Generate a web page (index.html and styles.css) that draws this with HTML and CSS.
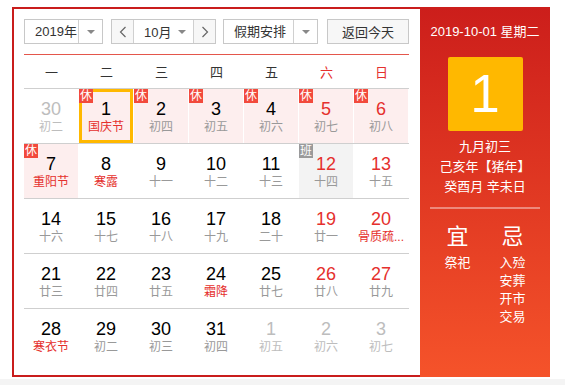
FILE: index.html
```html
<!DOCTYPE html>
<html lang="zh">
<head>
<meta charset="utf-8">
<title>万年历</title>
<link rel="stylesheet" href="styles.css">
</head>
<body>
<div class="page">
  <div class="cal">
    <div class="main">
      <div class="toolbar">
        <div class="select year">
          <span class="val">2019年</span>
          <span class="arrow"><i class="tri"></i></span>
        </div>
        <div class="month-group">
          <span class="nav nav-prev"><svg width="8" height="12" viewBox="0 0 8 12"><polyline points="6.5,1 1.5,6 6.5,11" fill="none" stroke="#666" stroke-width="1.2"/></svg></span>
          <span class="month"><span class="val">10月</span><i class="tri"></i></span>
          <span class="nav nav-next"><svg width="8" height="12" viewBox="0 0 8 12"><polyline points="1.5,1 6.5,6 1.5,11" fill="none" stroke="#666" stroke-width="1.2"/></svg></span>
        </div>
        <div class="select holiday">
          <span class="val">假期安排</span>
          <span class="arrow"><i class="tri"></i></span>
        </div>
        <div class="btn-today">返回今天</div>
      </div>
      <div class="redline"></div>
      <div class="weekdays">
        <span>一</span><span>二</span><span>三</span><span>四</span><span>五</span><span class="we">六</span><span class="we">日</span>
      </div>
      <div class="grid">
        <div class="cell"><div class="in other"><div class="num">30</div><div class="lunar">初二</div></div></div>
        <div class="cell"><div class="in rest sel"><span class="badge">休</span><div class="num">1</div><div class="lunar fest">国庆节</div></div></div>
        <div class="cell"><div class="in rest"><span class="badge">休</span><div class="num">2</div><div class="lunar">初四</div></div></div>
        <div class="cell"><div class="in rest"><span class="badge">休</span><div class="num">3</div><div class="lunar">初五</div></div></div>
        <div class="cell"><div class="in rest"><span class="badge">休</span><div class="num">4</div><div class="lunar">初六</div></div></div>
        <div class="cell"><div class="in rest"><span class="badge">休</span><div class="num red">5</div><div class="lunar">初七</div></div></div>
        <div class="cell"><div class="in rest"><span class="badge">休</span><div class="num red">6</div><div class="lunar">初八</div></div></div>

        <div class="cell"><div class="in rest"><span class="badge">休</span><div class="num">7</div><div class="lunar fest">重阳节</div></div></div>
        <div class="cell"><div class="in"><div class="num">8</div><div class="lunar fest">寒露</div></div></div>
        <div class="cell"><div class="in"><div class="num">9</div><div class="lunar">十一</div></div></div>
        <div class="cell"><div class="in"><div class="num">10</div><div class="lunar">十二</div></div></div>
        <div class="cell"><div class="in"><div class="num">11</div><div class="lunar">十三</div></div></div>
        <div class="cell"><div class="in work"><span class="badge gray">班</span><div class="num red">12</div><div class="lunar">十四</div></div></div>
        <div class="cell"><div class="in"><div class="num red">13</div><div class="lunar">十五</div></div></div>

        <div class="cell"><div class="in"><div class="num">14</div><div class="lunar">十六</div></div></div>
        <div class="cell"><div class="in"><div class="num">15</div><div class="lunar">十七</div></div></div>
        <div class="cell"><div class="in"><div class="num">16</div><div class="lunar">十八</div></div></div>
        <div class="cell"><div class="in"><div class="num">17</div><div class="lunar">十九</div></div></div>
        <div class="cell"><div class="in"><div class="num">18</div><div class="lunar">二十</div></div></div>
        <div class="cell"><div class="in"><div class="num red">19</div><div class="lunar">廿一</div></div></div>
        <div class="cell"><div class="in"><div class="num red">20</div><div class="lunar fest">骨质疏...</div></div></div>

        <div class="cell"><div class="in"><div class="num">21</div><div class="lunar">廿三</div></div></div>
        <div class="cell"><div class="in"><div class="num">22</div><div class="lunar">廿四</div></div></div>
        <div class="cell"><div class="in"><div class="num">23</div><div class="lunar">廿五</div></div></div>
        <div class="cell"><div class="in"><div class="num">24</div><div class="lunar fest">霜降</div></div></div>
        <div class="cell"><div class="in"><div class="num">25</div><div class="lunar">廿七</div></div></div>
        <div class="cell"><div class="in"><div class="num red">26</div><div class="lunar">廿八</div></div></div>
        <div class="cell"><div class="in"><div class="num red">27</div><div class="lunar">廿九</div></div></div>

        <div class="cell"><div class="in"><div class="num">28</div><div class="lunar fest">寒衣节</div></div></div>
        <div class="cell"><div class="in"><div class="num">29</div><div class="lunar">初二</div></div></div>
        <div class="cell"><div class="in"><div class="num">30</div><div class="lunar">初三</div></div></div>
        <div class="cell"><div class="in"><div class="num">31</div><div class="lunar">初四</div></div></div>
        <div class="cell"><div class="in other"><div class="num">1</div><div class="lunar">初五</div></div></div>
        <div class="cell"><div class="in other"><div class="num">2</div><div class="lunar">初六</div></div></div>
        <div class="cell"><div class="in other"><div class="num">3</div><div class="lunar">初七</div></div></div>
      </div>
    </div>
    <div class="side">
      <div class="side-date">2019-10-01 星期二</div>
      <div class="big-day">1</div>
      <div class="side-lunar">
        <div>九月初三</div>
        <div>己亥年【猪年】</div>
        <div>癸酉月 辛未日</div>
      </div>
      <div class="side-line"></div>
      <div class="yiji">
        <div class="yj-col">
          <div class="yj-title">宜</div>
          <div class="yj-item">祭祀</div>
        </div>
        <div class="yj-col">
          <div class="yj-title">忌</div>
          <div class="yj-item">入殓</div>
          <div class="yj-item">安葬</div>
          <div class="yj-item">开市</div>
          <div class="yj-item">交易</div>
        </div>
      </div>
    </div>
  </div>
</div>
</body>
</html>
```

FILE: styles.css
```css
* { box-sizing: border-box; margin: 0; padding: 0; }
html, body { background: #f4f4f4; }
body {
  font-family: "Liberation Sans", "Noto Sans CJK SC", sans-serif;
  color: #333;
  font-size: 13px;
}
.page {
  background: #fff;
  height: 379px;
  padding: 7px 15px 0 12px;
}
.cal {
  display: flex;
  width: 538px;
  height: 370px;
}
.main {
  width: 408px;
  height: 370px;
  border: 2px solid #c91d1c;
  border-right: none;
  padding: 10px 11px 0 10px;
}
.toolbar {
  display: flex;
  height: 25px;
}
.select, .month-group, .btn-today {
  height: 25px;
  border: 1px solid #c8c8c8;
  display: flex;
  align-items: center;
  font-size: 13px;
  color: #333;
}
.select .val { flex: 1; padding-left: 10px; line-height: 23px; }
.select .arrow {
  width: 24px;
  height: 23px;
  border-left: 1px solid #d0d0d0;
  display: flex;
  align-items: center;
  justify-content: center;
}
.tri {
  display: block;
  width: 0;
  height: 0;
  border-left: 4px solid transparent;
  border-right: 4px solid transparent;
  border-top: 4px solid #888;
}
.year { width: 79px; }
.month-group { width: 105px; margin-left: 8px; }
.nav {
  width: 22px;
  height: 23px;
  background: #f7f7f7;
  display: flex;
  align-items: center;
  justify-content: center;
}
.nav-prev { border-right: 1px solid #d0d0d0; }
.nav-next { border-left: 1px solid #d0d0d0; width: 22px; }
.month {
  flex: 1;
  display: flex;
  align-items: center;
  padding-left: 10px;
  padding-right: 7px;
}
.month .val { flex: 1; }
.holiday { width: 95px; margin-left: 7px; }
.btn-today {
  width: 82px;
  margin-left: 9px;
  background: #f7f7f7;
  justify-content: center;
}
.redline {
  height: 1px;
  background: #e4564b;
  margin-top: 10px;
}
.weekdays {
  display: grid;
  grid-template-columns: repeat(7, 55px);
  height: 33px;
  align-items: center;
  text-align: center;
  font-size: 13px;
  color: #333;
}
.weekdays .we { color: #e5302d; }
.grid {
  display: grid;
  grid-template-columns: repeat(7, 55px);
  grid-auto-rows: 55px;
}
.cell {
  border-top: 1px solid #cfcfcf;
  padding-right: 1px;
}
.in {
  position: relative;
  height: 54px;
  text-align: center;
  padding-top: 10px;
}
.in.rest { background: #fdeeee; }
.in.work { background: #f3f3f3; }
.in.sel { box-shadow: inset 0 0 0 3px #ffb800; }
.num {
  font-size: 18px;
  line-height: 20px;
  color: #000;
}
.num.red { color: #e5302d; }
.lunar {
  font-size: 12px;
  line-height: 16px;
  color: #999;
  white-space: nowrap;
}
.lunar.fest { color: #e5302d; }
.in.other .num, .in.other .lunar { color: #bdbdbd; }
.badge {
  position: absolute;
  top: 0;
  left: 0;
  width: 14px;
  height: 14px;
  background: #f24a3c;
  color: #fff;
  font-size: 12px;
  line-height: 14px;
  text-align: center;
}
.badge.gray { background: #9a9a9a; }
.side {
  width: 130px;
  height: 370px;
  background: linear-gradient(to bottom, #cc1e1b, #f5532a);
  color: #fff;
  display: flex;
  flex-direction: column;
  align-items: center;
}
.side-date {
  margin-top: 17px;
  font-size: 13px;
  line-height: 16px;
}
.big-day {
  margin-top: 17px;
  width: 75px;
  height: 74px;
  background: #ffb800;
  border-radius: 2px;
  font-size: 53px;
  line-height: 74px;
  text-align: center;
  color: #fff;
}
.side-lunar {
  margin-top: 6px;
  font-size: 13px;
  line-height: 20px;
  text-align: center;
}
.side-line {
  width: 110px;
  height: 2px;
  background: rgba(255, 255, 255, 0.4);
  margin-top: 10px;
}
.yiji {
  display: flex;
  width: 110px;
  margin-top: 15px;
}
.yj-col {
  width: 55px;
  text-align: center;
}
.yj-title {
  font-size: 22px;
  line-height: 26px;
  margin-bottom: 4px;
}
.yj-item {
  font-size: 13px;
  line-height: 18px;
}
```
